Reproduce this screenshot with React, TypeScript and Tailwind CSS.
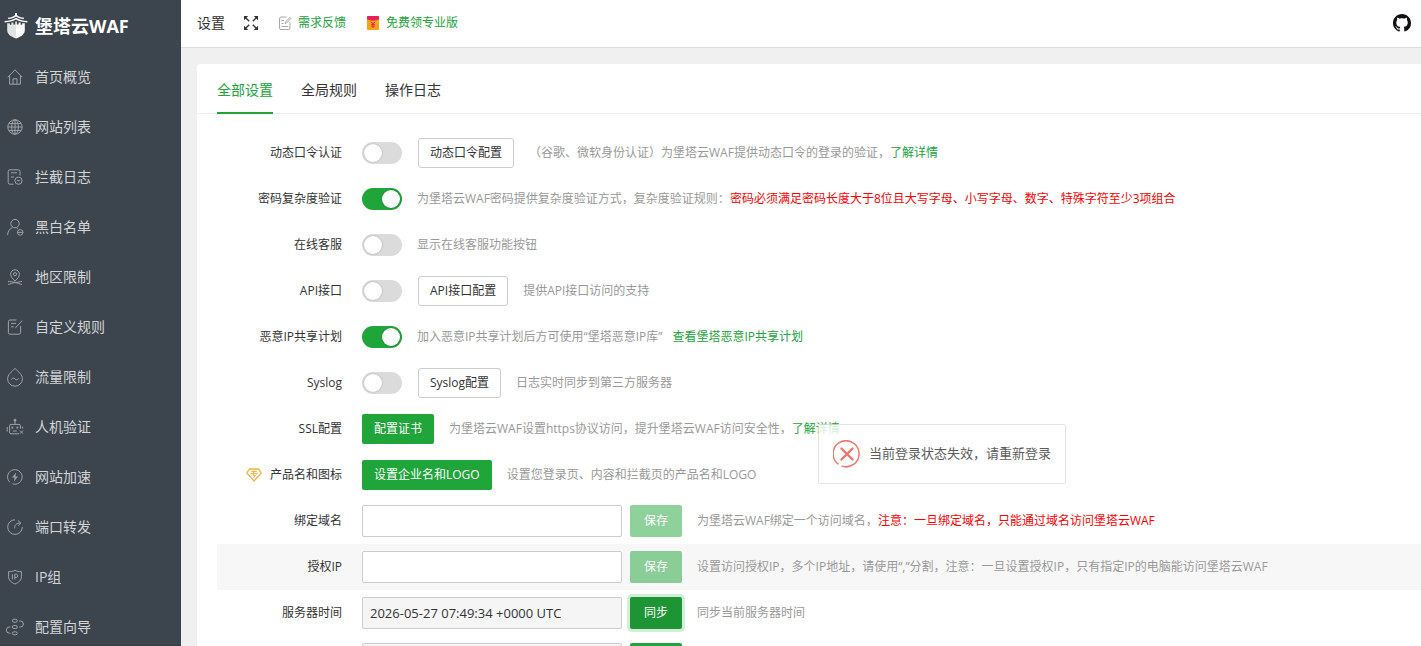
import { ReactNode } from "react";

const MENU: { nome: string; icone: ReactNode }[] = [
    {
        nome: "首页概览",
        icone: <path d="M.8 8.2 8 .8l7.2 7.4M2.6 7v8.2h10.8V7M6 15V9.8h4V15" />,
    },
    {
        nome: "网站列表",
        icone: (
            <>
                <circle cx="8" cy="8" r="7.2" />
                <ellipse cx="8" cy="8" rx="3.4" ry="7.2" />
                <path d="M8 .8v14.4M1 8h14M2 4.6h12M2 11.4h12" />
            </>
        ),
    },
    {
        nome: "拦截日志",
        icone: (
            <>
                <path d="M6.5 15.2H2.8a1.6 1.6 0 0 1-1.6-1.6V2.4A1.6 1.6 0 0 1 2.8.8h8.6A1.6 1.6 0 0 1 13 2.4v4M4 3.8h6M4 8h3" />
                <circle cx="11.5" cy="11.7" r="3.6" />
                <path d="M9.8 11.7h3.4" />
            </>
        ),
    },
    {
        nome: "黑白名单",
        icone: (
            <>
                <circle cx="8" cy="4.6" r="4.2" />
                <path d="M.6 16.2c.2-3.8 1.9-6.4 4.8-7.8M9.6 9l1.2.8" />
                <circle cx="13.2" cy="13.4" r="2.8" />
                <path d="M10.6 13.4h5.2" />
            </>
        ),
    },
    {
        nome: "地区限制",
        icone: (
            <>
                <path d="M8 12C5 9.4 3.6 7.4 3.6 5.2a4.4 4.4 0 0 1 8.8 0C12.4 7.4 11 9.4 8 12Z" />
                <circle cx="8" cy="5.2" r="1.6" />
                <path d="M1 12.4c2.4 0 4 .6 7 1s4.6-1 7-1M1 15.4c2.4 0 4-1.8 7-1.8s4.6 1.8 7 1.8" />
            </>
        ),
    },
    {
        nome: "自定义规则",
        icone: (
            <path d="M9.5 1H3a1.6 1.6 0 0 0-1.6 1.6v11A1.6 1.6 0 0 0 3 15.2h9a1.6 1.6 0 0 0 1.6-1.6V7M15.2 1.6 8.2 9.2M4 4.4h5M4 7.8h2.6" />
        ),
    },
    {
        nome: "流量限制",
        icone: (
            <>
                <path d="M8-.6C11.6 3 15.4 5.8 15.4 9.8a7.4 7.4 0 0 1-14.8 0C.6 5.8 4.4 3 8-.6Z" />
                <path d="M4.4 10.6c1.2-2 2.4-2 3.6-.6s2.4 1.2 3.6-.8" />
            </>
        ),
    },
    {
        nome: "人机验证",
        icone: (
            <>
                <path d="M12 14.8H4a1.4 1.4 0 0 1-1.4-1.4V6.8A1.4 1.4 0 0 1 4 5.4h8a1.4 1.4 0 0 1 1.4 1.4v3M8 5V2M.2 8v4.6M15.6 7.6v2M5.8 12h4M13 11.6l3 3M16 11.6l-3 3" />
                <path d="M5.4 7.8v1.8M10.4 7.8v1.8" strokeWidth="1.8" />
                <circle cx="8" cy="1.2" r="1" fill="currentColor" />
            </>
        ),
    },
    {
        nome: "网站加速",
        icone: (
            <>
                <path d="M2.8 13.2A7.3 7.3 0 1 1 5.4 14.8" />
                <path d="M9 3.4 5 8.6h2.6L7 12.6l4-5.2H8.4Z" fill="currentColor" stroke="none" />
            </>
        ),
    },
    {
        nome: "端口转发",
        icone: (
            <path d="M8 .8a7.3 7.3 0 1 0 7.3 7.3M7.6 9.4C7.6 5.8 9.4 4 13.6 4M10.8 1.4 13.8 4l-2.6 2.6" />
        ),
    },
    {
        nome: "IP组",
        icone: (
            <>
                <path d="M8 1.2c2 1.2 4 1.6 6.4 1.4v5.2c0 3.2-2.4 5.6-6.4 7.2-4-1.6-6.4-4-6.4-7.2V2.6C4 2.8 6 2.4 8 1.2Z" />
                <path d="M5.4 5.2v5.2M7.8 10.4V5.2h1.4a1.5 1.5 0 0 1 0 3.2H7.8" />
            </>
        ),
    },
    {
        nome: "配置向导",
        icone: (
            <>
                <rect x="5.4" y=".2" width="4.8" height="3" rx="1.5" />
                <rect x="5.4" y="6.5" width="4.8" height="3" rx="1.5" />
                <rect x="5.4" y="12.8" width="4.8" height="3" rx="1.5" />
                <path d="M12.4 2h1a2.9 2.9 0 0 1 0 6h-1M3.4 8h-1a3 3 0 0 0 0 6.2h1" />
            </>
        ),
    },
];

const ABAS = ["全部设置", "全局规则", "操作日志"];

function Switch({ id, ligado = false }: { id: string; ligado?: boolean }) {
    return (
        <input
            id={id}
            type="checkbox"
            role="switch"
            defaultChecked={ligado}
            className="h-[22px] w-10 shrink-0 cursor-pointer appearance-none rounded-full bg-[#dbdbdb] p-0.5 before:block before:size-[18px] before:rounded-full before:bg-white before:shadow-[0_0_2px_rgba(0,0,0,0.25)] checked:bg-[#20a53a] checked:before:ml-[18px]"
        />
    );
}

function BotaoBorda({ children }: { children: ReactNode }) {
    return (
        <button
            type="button"
            className="ml-4 h-[30px] shrink-0 rounded-[3px] border border-[#ccc] bg-white px-[11px] text-[#333]"
        >
            {children}
        </button>
    );
}

function BotaoVerde({ children }: { children: ReactNode }) {
    return (
        <button type="button" className="h-[30px] shrink-0 rounded-[2px] bg-[#20a53a] px-3 text-white">
            {children}
        </button>
    );
}

function Salvar() {
    return (
        <button
            type="button"
            disabled
            className="ml-2 h-8 w-[52px] shrink-0 rounded-[2px] bg-[#20a53a] text-white opacity-50"
        >
            保存
        </button>
    );
}

type LinhaProps = {
    id?: string;
    nome?: string;
    icone?: ReactNode;
    dica?: ReactNode;
    destaque?: boolean;
    children: ReactNode;
};

function Linha({ id, nome, icone, dica, destaque = false, children }: LinhaProps) {
    return (
        <div className={destaque ? "flex h-[46px] items-center bg-[#f7f7f7]" : "flex h-[46px] items-center"}>
            <div className="mr-5 flex w-[125px] shrink-0 items-center justify-end gap-2">
                {icone}
                {nome && (
                    <label htmlFor={id} className="text-[#333]">
                        {nome}
                    </label>
                )}
            </div>
            {children}
            {dica && <p className="ml-[15px] whitespace-nowrap text-[#999]">{dica}</p>}
        </div>
    );
}

function Link({ children }: { children: ReactNode }) {
    return (
        <a href="#" className="text-[#20a53a]">
            {children}
        </a>
    );
}

function Logo() {
    return (
        <svg viewBox="0 0 24 26" className="h-[26px] w-6 shrink-0" fill="#fff">
            <path d="M11 0h2v2.2c2 1.4 4.2 2.2 7 2.6v1.2C16.8 5.8 14.2 5 12 3.6 9.8 5 7.2 5.8 4 6V4.8c2.8-.4 5-1.2 7-2.6Z" />
            <path d="M12 4.8c3 2 6.6 3 11.4 3.2v1.4C18.6 9.2 15 8.4 12 6.6 9 8.4 5.4 9.2.6 9.4V8C5.4 7.8 9 6.8 12 4.8Z" />
            <path d="M3.2 10.2h2.6v1.6h1.6V9.6h2v2h1.8V8.6h.8v16.8c-5.8-1.8-8.8-4.6-8.8-8.4Z" fill="#e2e3e4" />
            <path d="M20.8 10.2h-2.6v1.6h-1.6V9.6h-2v2h-1.8V8.6H12v16.8c5.8-1.8 8.8-4.6 8.8-8.4Z" />
        </svg>
    );
}

function MenuLateral() {
    return (
        <aside className="w-[181px] shrink-0 overflow-hidden border-b border-[#333a42] bg-[#3c444d]">
            <div className="flex h-[52px] items-center gap-[7px] pl-1 text-lg font-bold text-white">
                <Logo />
                堡塔云WAF
            </div>
            <nav>
                {MENU.map((item) => (
                    <a
                        key={item.nome}
                        href="#"
                        className="flex h-[50px] items-center gap-3 pl-[7px] text-sm text-[#d3d5d7]"
                    >
                        <svg
                            viewBox="0 0 16 16"
                            className="size-4 shrink-0 overflow-visible text-[#a0a3a6]"
                            fill="none"
                            stroke="currentColor"
                        >
                            {item.icone}
                        </svg>
                        {item.nome}
                    </a>
                ))}
            </nav>
        </aside>
    );
}

function Cabecalho() {
    return (
        <header className="flex h-12 shrink-0 items-center border-b border-[#dcdfe6] bg-white px-4 pb-0.5 text-xs">
            <h1 className="text-sm text-[#333]">设置</h1>
            <button type="button" aria-label="全屏" className="ml-[18px]">
                <svg viewBox="0 0 16 16" className="size-4" fill="#333" stroke="#333" strokeWidth="1.4">
                    <path d="m2 2 4.2 4.2M14 2 9.8 6.2M2 14l4.2-4.2M14 14 9.8 9.8" />
                    <path
                        d="M1 1h4.2L1 5.2ZM15 1h-4.2L15 5.2ZM1 15h4.2L1 10.8ZM15 15h-4.2l4.2-4.2Z"
                        stroke="none"
                    />
                </svg>
            </button>
            <a href="#" className="ml-[19px] flex items-center gap-1.5 text-[#20a53a]">
                <svg viewBox="0 0 14 14" className="size-3.5" fill="none" stroke="#a8a8a8">
                    <path d="M8.5 1H3a1.5 1.5 0 0 0-1.5 1.5v9.5A1.5 1.5 0 0 0 3 13.5h7.5A1.5 1.5 0 0 0 12 12V6.5M12.5.8 7.5 6l-.5 1.5 1.5-.5 4.8-5M3.5 4.5h2.5M3.5 7.5h2M3.5 10.5H10" />
                </svg>
                需求反馈
            </a>
            <a href="#" className="ml-5 flex items-center gap-1.5 text-[#20a53a]">
                <svg viewBox="0 0 14 14" className="size-3.5">
                    <rect x="1" width="12" height="14" rx="1" fill="#f9a21b" />
                    <path d="M2 0h10a1 1 0 0 1 1 1v2.2C9.5 5 4.5 5 1 3.2V1a1 1 0 0 1 1-1Z" fill="#e6205c" />
                    <path d="m5.2 5.8 1.8 2 1.8-2M7 7.8v4M5.2 8.4h3.6M5.2 10.2h3.6" fill="none" stroke="#e6205c" />
                </svg>
                免费领专业版
            </a>
            <a href="#" aria-label="GitHub" className="-mr-1.5 ml-auto">
                <svg viewBox="0 0 16 16" className="size-[18px]" fill="#111">
                    <path d="M8 0C3.58 0 0 3.58 0 8c0 3.54 2.29 6.53 5.47 7.59.4.07.55-.17.55-.38 0-.19-.01-.82-.01-1.49-2.01.37-2.53-.49-2.69-.94-.09-.23-.48-.94-.82-1.13-.28-.15-.68-.52-.01-.53.63-.01 1.08.58 1.23.82.72 1.21 1.87.87 2.33.66.07-.52.28-.87.51-1.07-1.78-.2-3.64-.89-3.64-3.95 0-.87.31-1.59.82-2.15-.08-.2-.36-1.02.08-2.12 0 0 .67-.21 2.2.82.64-.18 1.32-.27 2-.27s1.36.09 2 .27c1.53-1.04 2.2-.82 2.2-.82.44 1.1.16 1.92.08 2.12.51.56.82 1.27.82 2.15 0 3.07-1.87 3.75-3.65 3.95.29.25.54.73.54 1.48 0 1.07-.01 1.93-.01 2.2 0 .21.15.46.55.38A8.01 8.01 0 0 0 16 8c0-4.42-3.58-8-8-8Z" />
                </svg>
            </a>
        </header>
    );
}

const CAMPO = "h-8 w-[260px] shrink-0 rounded-[2px] border border-[#ccc] px-[7px] text-[13px] text-[#333]";

function Configuracoes() {
    return (
        <div className="pt-4 pl-5 text-xs">
            <Linha
                id="otp"
                nome="动态口令认证"
                dica={<>（谷歌、微软身份认证）为堡塔云WAF提供动态口令的登录的验证，<Link>了解详情</Link></>}
            >
                <Switch id="otp" />
                <BotaoBorda>动态口令配置</BotaoBorda>
            </Linha>
            <Linha
                id="senha"
                nome="密码复杂度验证"
                dica={
                    <>
                        为堡塔云WAF密码提供复杂度验证方式，复杂度验证规则：
                        <span className="text-[#f00]">
                            密码必须满足密码长度大于8位且大写字母、小写字母、数字、特殊字符至少3项组合
                        </span>
                    </>
                }
            >
                <Switch id="senha" ligado />
            </Linha>
            <Linha id="suporte" nome="在线客服" dica="显示在线客服功能按钮">
                <Switch id="suporte" />
            </Linha>
            <Linha id="api" nome="API接口" dica="提供API接口访问的支持">
                <Switch id="api" />
                <BotaoBorda>API接口配置</BotaoBorda>
            </Linha>
            <Linha
                id="ip-malicioso"
                nome="恶意IP共享计划"
                dica={
                    <>
                        加入恶意IP共享计划后方可使用“堡塔恶意IP库”
                        <span className="ml-2.5">
                            <Link>查看堡塔恶意IP共享计划</Link>
                        </span>
                    </>
                }
            >
                <Switch id="ip-malicioso" ligado />
            </Linha>
            <Linha id="syslog" nome="Syslog" dica="日志实时同步到第三方服务器">
                <Switch id="syslog" />
                <BotaoBorda>Syslog配置</BotaoBorda>
            </Linha>
            <Linha
                nome="SSL配置"
                dica={<>为堡塔云WAF设置https协议访问，提升堡塔云WAF访问安全性，<Link>了解详情</Link></>}
            >
                <BotaoVerde>配置证书</BotaoVerde>
            </Linha>
            <Linha
                nome="产品名和图标"
                dica="设置您登录页、内容和拦截页的产品名和LOGO"
                icone={
                    <svg viewBox="0 0 16 14" className="h-3.5 w-4" fill="none" stroke="#fbb03b" strokeWidth="1.3">
                        <path d="M3.6 1h8.8l2.8 4L8 13 .8 5Z" />
                        <path d="M5.2 3.6h5.6M4.6 5.6h6.8M8 2.4 7 7.4h2.6L7.6 9.6" strokeWidth="1" />
                    </svg>
                }
            >
                <BotaoVerde>设置企业名和LOGO</BotaoVerde>
            </Linha>
            <Linha
                id="dominio"
                nome="绑定域名"
                dica={
                    <>
                        为堡塔云WAF绑定一个访问域名，
                        <span className="text-[#f00]">注意：一旦绑定域名，只能通过域名访问堡塔云WAF</span>
                    </>
                }
            >
                <input id="dominio" type="text" className={CAMPO} />
                <Salvar />
            </Linha>
            <Linha
                id="ip-autorizado"
                nome="授权IP"
                destaque
                dica="设置访问授权IP，多个IP地址，请使用“,”分割，注意：一旦设置授权IP，只有指定IP的电脑能访问堡塔云WAF"
            >
                <input id="ip-autorizado" type="text" className={`${CAMPO} bg-white`} />
                <Salvar />
            </Linha>
            <Linha id="hora" nome="服务器时间" dica="同步当前服务器时间">
                <input
                    id="hora"
                    type="text"
                    readOnly
                    value="2026-05-27 07:49:34 +0000 UTC"
                    className={`${CAMPO} bg-[#f5f5f5]`}
                />
                <button
                    type="button"
                    className="ml-2 h-8 w-[52px] shrink-0 rounded-[2px] bg-[#1d9534] text-white ring-3 ring-[#20a53a]/20"
                >
                    同步
                </button>
            </Linha>
            <Linha>
                <input type="text" readOnly className={`${CAMPO} bg-[#f5f5f5]`} />
                <button type="button" className="ml-2 h-8 w-[52px] shrink-0 rounded-[2px] bg-[#20a53a]" />
            </Linha>
        </div>
    );
}

function Aviso() {
    return (
        <div
            role="alert"
            className="fixed top-[424px] left-[818px] flex h-[60px] items-center gap-2 rounded-[2px] border border-[#dedede] bg-white px-3.5 text-[13px] opacity-80"
        >
            <svg viewBox="0 0 28 28" className="size-7" fill="none" stroke="#ea5548">
                <path d="M5.6 24.4A13 13 0 1 1 8.4 25.9" strokeWidth="1.5" />
                <path d="m8.5 8.5 11 11M19.5 8.5l-11 11" strokeWidth="2.4" strokeLinecap="round" />
            </svg>
            <span className="text-[#333]">当前登录状态失效，请重新登录</span>
        </div>
    );
}

export default function App() {
    return (
        <div className="flex h-screen overflow-hidden bg-[#f0f0f0] font-['Open_Sans','Noto_Sans_CJK_SC',sans-serif]">
            <MenuLateral />
            <div className="flex min-w-0 flex-1 flex-col">
                <Cabecalho />
                <main className="mt-4 ml-4 flex-1 overflow-hidden rounded-tl bg-white">
                    <div role="tablist" className="flex h-[50px] gap-7 border-b border-[#ebeef5] pl-5 text-sm">
                        {ABAS.map((aba, i) => (
                            <button
                                key={aba}
                                type="button"
                                role="tab"
                                aria-selected={i === 0}
                                className="-mb-px border-b-2 border-transparent pt-1 text-[#333] aria-selected:border-[#20a53a] aria-selected:text-[#20a53a]"
                            >
                                {aba}
                            </button>
                        ))}
                    </div>
                    <Configuracoes />
                </main>
            </div>
            <Aviso />
        </div>
    );
}
